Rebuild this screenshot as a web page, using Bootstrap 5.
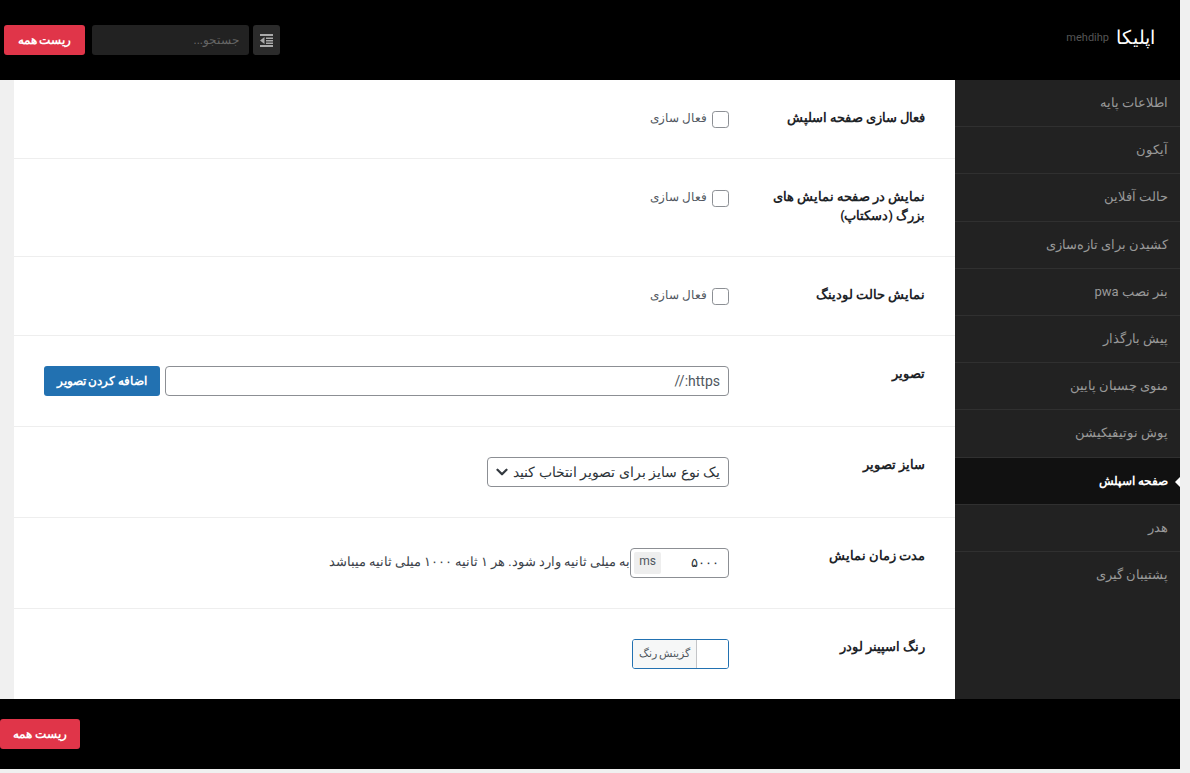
<!DOCTYPE html>
<html lang="fa" dir="rtl">
<head>
<meta charset="utf-8">
<title>اپلیکا</title>
<link href="https://cdn.jsdelivr.net/npm/bootstrap@5.3.0/dist/css/bootstrap.min.css" rel="stylesheet">
<style>
body{background:#f0f0f0;font-family:Roboto,sans-serif;font-size:13px;color:#1d2327;height:773px;overflow:hidden}
.shell{margin-right:10px}
.topbar{background:#000;height:80px;padding:25px 25px 0 4px}
.brand-name{font-size:19px;color:#fff;line-height:26px}
.brand-sub{font-size:11px;color:#555;margin-right:7px}
.tool-toggle{width:27px;height:30px;background:#2b2b2b;border:0;border-radius:3px;padding:0}
.tool-search{width:157px;height:30px;background:#222;border:0;border-radius:3px;color:#888;font-size:12px;padding:0 10px;margin-right:4px}
.tool-search::placeholder{color:#666}
.reset-btn{width:81px;height:30px;padding:0;font-size:11.5px;font-weight:700;line-height:28px;background:#e03549;border:0;border-radius:3px;color:#fff}
.topbar .reset-btn{margin-right:7px}
.body-row{height:619px}
.side-menu{width:225px;background:#222;flex:none}
.side-item{display:block;padding:15px 12px;line-height:16.2px;border-bottom:1px solid #303030;color:#999;text-decoration:none;position:relative}
.side-item:last-child{border-bottom:0}
.side-item.is-active{background:#111;color:#fff;font-weight:700;font-size:12.2px}
.side-item.is-active::after{content:"";position:absolute;right:0;top:19px;border-style:solid;border-width:5px 5px 5px 0;border-color:transparent #fff transparent transparent}
.main-pane{background:#fff;width:941px;flex:none}
.set-row{padding:30px;border-bottom:1px solid #eee;align-items:flex-start}
.set-row:last-child{border-bottom:0}
.set-label{width:196px;flex:none;padding-left:40px;font-size:12.5px;font-weight:700;line-height:19px;margin-top:-2px;margin-bottom:1px}
.set-check{width:17px;height:17px;margin:0;border:1px solid #8c8f94;border-radius:4px;flex:none;float:none}
.check-text{color:#50575e;font-size:12px;margin-right:5px;margin-top:-2px}
.check-line{height:18px}
.url-input{height:30px;border:1px solid #8c8f94;border-radius:4px;font-size:14px;padding:0 8px;color:#50575e;min-height:30px}
.add-btn{height:30px;width:116px;flex:none;margin-right:5px;background:#2271b1;border:0;border-radius:3px;color:#fff;font-size:12px;font-weight:700;padding:0;white-space:nowrap}
.size-select{width:242px;height:30px;min-height:30px;border:1px solid #8c8f94;border-radius:4px;font-size:14px;color:#2c3338;padding:0 8px 0 24px;background-image:url("data:image/svg+xml,%3csvg xmlns='http://www.w3.org/2000/svg' viewBox='0 0 16 16'%3e%3cpath fill='none' stroke='%23343a40' stroke-linecap='round' stroke-linejoin='round' stroke-width='3' d='m2 5 6 6 6-6'/%3e%3c/svg%3e");background-position:left 8px center;background-size:12px 12px}
.num-box{width:99px;height:30px;border:1px solid #8c8f94;border-radius:4px;padding:3px;flex:none;align-items:center}
.num-val{width:60px;padding:0 6px 0 0;font-size:13px;color:#2c3338}
.num-unit{width:27px;height:22px;background:#eee;border-radius:2px;font-size:12px;line-height:18px;color:#50575e;text-align:center;margin-right:auto}
.help-note{color:#3c434a;font-size:12.5px;line-height:28px}
.color-pick{width:97px;height:30px;border:1px solid #2271b1;border-radius:3px;overflow:hidden}
.color-swatch{width:32px;background:#fff;border-left:1px solid #c3c4c7}
.color-text{flex:1;background:#f6f7f7;font-size:11px;color:#50575e;line-height:28px;text-align:center}
.bottombar{background:#000;height:70px;padding:20px 0 0 0}
.bottombar .reset-btn{width:80px}
</style>
</head>
<body>
<div class="shell">
  <header class="topbar d-flex align-items-start justify-content-between">
    <div class="d-flex align-items-center">
      <span class="brand-name">اپلیکا</span>
      <span class="brand-sub">mehdihp</span>
    </div>
    <div class="d-flex">
      <button class="tool-toggle d-flex align-items-center justify-content-center" type="button" aria-label="منو">
        <svg width="13" height="13" viewBox="0 0 13 13"><path fill="#aaa" d="M0 0h13v2H0zM6 3.5h7v1.5H6zM6 6h7v1.5H6zM6 8.5h7V10H6zM0 11h13v2H0zM4.5 3v7L0 6.5z"/></svg>
      </button>
      <input class="tool-search" type="text" placeholder="جستجو...">
      <button class="reset-btn btn" type="button">ریست همه</button>
    </div>
  </header>
  <div class="body-row d-flex">
    <nav class="side-menu">
      <a class="side-item" href="#">اطلاعات پایه</a>
      <a class="side-item" href="#">آیکون</a>
      <a class="side-item" href="#">حالت آفلاین</a>
      <a class="side-item" href="#">کشیدن برای تازه‌سازی</a>
      <a class="side-item" href="#">بنر نصب pwa</a>
      <a class="side-item" href="#">پیش بارگذار</a>
      <a class="side-item" href="#">منوی چسبان پایین</a>
      <a class="side-item" href="#">پوش نوتیفیکیشن</a>
      <a class="side-item is-active" href="#">صفحه اسپلش</a>
      <a class="side-item" href="#">هدر</a>
      <a class="side-item" href="#">پشتیبان گیری</a>
    </nav>
    <main class="main-pane">
      <div class="set-row d-flex">
        <div class="set-label">فعال سازی صفحه اسلپش</div>
        <label class="check-line d-flex align-items-center"><input class="form-check-input set-check" type="checkbox"><span class="check-text">فعال سازی</span></label>
      </div>
      <div class="set-row d-flex">
        <div class="set-label">نمایش در صفحه نمایش های بزرگ (دسکتاپ)</div>
        <label class="check-line d-flex align-items-center"><input class="form-check-input set-check" type="checkbox"><span class="check-text">فعال سازی</span></label>
      </div>
      <div class="set-row d-flex">
        <div class="set-label">نمایش حالت لودینگ</div>
        <label class="check-line d-flex align-items-center"><input class="form-check-input set-check" type="checkbox"><span class="check-text">فعال سازی</span></label>
      </div>
      <div class="set-row d-flex">
        <div class="set-label">تصویر</div>
        <div class="d-flex flex-grow-1">
          <input class="form-control url-input" type="text" value="https://">
          <button class="add-btn" type="button">اضافه کردن تصویر</button>
        </div>
      </div>
      <div class="set-row d-flex">
        <div class="set-label">سایز تصویر</div>
        <select class="form-select size-select"><option>یک نوع سایز برای تصویر انتخاب کنید</option></select>
      </div>
      <div class="set-row d-flex">
        <div class="set-label">مدت زمان نمایش</div>
        <div class="num-box d-flex"><span class="num-val">۵۰۰۰</span><span class="num-unit">ms</span></div>
        <span class="help-note">به میلی ثانیه وارد شود. هر ۱ ثانیه ۱۰۰۰ میلی ثانیه میباشد</span>
      </div>
      <div class="set-row d-flex">
        <div class="set-label">رنگ اسپینر لودر</div>
        <div class="color-pick d-flex"><span class="color-swatch"></span><span class="color-text">گزینش رنگ</span></div>
      </div>
    </main>
  </div>
  <footer class="bottombar d-flex justify-content-end">
    <button class="reset-btn btn" type="button">ریست همه</button>
  </footer>
</div>
<script src="https://cdn.jsdelivr.net/npm/bootstrap@5.3.0/dist/js/bootstrap.bundle.min.js"></script>
</body>
</html>
